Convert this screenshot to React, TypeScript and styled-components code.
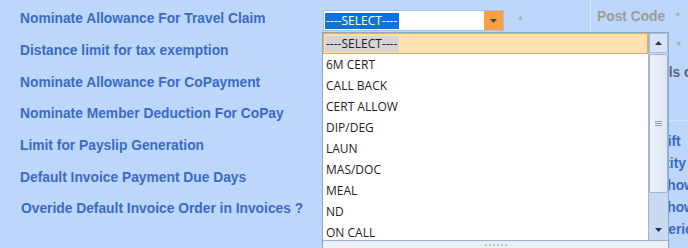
import React from "react";
import styled, { createGlobalStyle } from "styled-components";

const GlobalStyle = createGlobalStyle`
  html, body {
    margin: 0;
    padding: 0;
  }
  body {
    background: #bdd7fa;
    font-family: "Liberation Sans", Arial, sans-serif;
  }
`;

const labels = [
  "Nominate Allowance For Travel Claim",
  "Distance limit for tax exemption",
  "Nominate Allowance For CoPayment",
  "Nominate Member Deduction For CoPay",
  "Limit for Payslip Generation",
  "Default Invoice Payment Due Days",
  "Overide Default Invoice Order in Invoices ?",
];

const options = [
  "----SELECT----",
  "6M CERT",
  "CALL BACK",
  "CERT ALLOW",
  "DIP/DEG",
  "LAUN",
  "MAS/DOC",
  "MEAL",
  "ND",
  "ON CALL",
  "OT",
];

const sideRows = [
  { text: "Shift", indent: 53 },
  { text: "Quantity", indent: 33 },
  { text: "Show", indent: 61 },
  { text: "Show", indent: 61 },
  { text: "Period", indent: 62 },
];

export default function App() {
  return (
    <>
      <GlobalStyle />
      <Page>
        <Form>
          {labels.map((text, i) => (
            <FormRow key={text}>
              <Label $indent={i === 6 ? 1 : 0}>{text}</Label>
              {i === 0 && (
                <Field>
                  <SelectWrap>
                    <SelectBox>
                      <SelectText>
                        <Highlight>----SELECT----</Highlight>
                      </SelectText>
                      <ArrowButton>
                        <svg width="7" height="4" viewBox="0 0 7 4">
                          <path d="M0 0h7L3.5 4z" fill="#3b4d66" />
                        </svg>
                      </ArrowButton>
                    </SelectBox>

                    <DropPanel>
                      <ListBody>
                        <Items>
                          {options.map((o, j) => (
                            <Item key={o} $active={j === 0}>
                              <ItemText $active={j === 0}>{o}</ItemText>
                            </Item>
                          ))}
                        </Items>
                        <ScrollBar>
                          <ScrollButton $framed>
                            <svg width="7" height="4" viewBox="0 0 7 4">
                              <path d="M0 4h7L3.5 0z" fill="#2f3742" />
                            </svg>
                          </ScrollButton>
                          <Thumb>
                            <Grip />
                            <Grip />
                            <Grip />
                          </Thumb>
                          <Track />
                          <ScrollButton>
                            <svg width="7" height="4" viewBox="0 0 7 4">
                              <path d="M0 0h7L3.5 4z" fill="#2f3742" />
                            </svg>
                          </ScrollButton>
                        </ScrollBar>
                      </ListBody>
                      <Footer>
                        <Dot />
                        <Dot />
                        <Dot />
                        <Dot />
                        <Dot />
                        <Dot />
                      </Footer>
                    </DropPanel>
                  </SelectWrap>
                  <Star $gap={14}>*</Star>
                </Field>
              )}
            </FormRow>
          ))}
        </Form>

        <SidePanel>
          <SideRow $h={28} $indent={0}>
            <SideLabel $tone="muted">Post Code</SideLabel>
            <Star $gap={10}>*</Star>
          </SideRow>
          <SideRow $h={30} $indent={79}>
            <Star $gap={0}>*</Star>
          </SideRow>
          <SideRow $h={24} $indent={38}>
            <SideLabel $tone="dark">Details c</SideLabel>
          </SideRow>
          <Divider />
          <SideList>
            {sideRows.map((r, i) => (
              <SideRow key={i} $h={22} $indent={r.indent}>
                <SideLabel $tone="blue">{r.text}</SideLabel>
              </SideRow>
            ))}
          </SideList>
        </SidePanel>
      </Page>
    </>
  );
}

const Page = styled.div`
  position: relative;
  display: flex;
  width: 688px;
  height: 248px;
  overflow: hidden;
  background: #bdd7fa;
`;

const Form = styled.div`
  width: 590px;
  flex-shrink: 0;
  padding-top: 3px;
  display: flex;
  flex-direction: column;
`;

const FormRow = styled.div`
  display: flex;
  align-items: center;
  height: 31.7px;
  flex-shrink: 0;
`;

const Label = styled.label<{ $indent: number }>`
  width: 323px;
  flex-shrink: 0;
  box-sizing: border-box;
  padding-left: ${(p) => 20 + p.$indent}px;
  font-size: 13.8px;
  font-weight: bold;
  color: #3a6bc2;
  white-space: nowrap;
`;

const Field = styled.div`
  display: flex;
  align-items: center;
  margin-top: 4px;
`;

const SelectWrap = styled.div`
  position: relative;
`;

const SelectBox = styled.div`
  display: flex;
  width: 181px;
  height: 21px;
  box-sizing: border-box;
  border: 1px solid #a8c3e8;
  background: #fff;
`;

const SelectText = styled.div`
  flex: 1;
  display: flex;
  align-items: center;
  padding-left: 1px;
`;

const Highlight = styled.span`
  background: #0a74da;
  color: #fff;
  font-family: "Open Sans", sans-serif;
  font-size: 12px;
  line-height: 16px;
  padding: 0 2px 0 1px;
`;

const ArrowButton = styled.div`
  width: 19px;
  display: flex;
  align-items: center;
  justify-content: center;
  background: #f8a043;
`;

const Star = styled.span<{ $gap: number }>`
  margin-left: ${(p) => p.$gap}px;
  font-size: 13px;
  color: #a3a3a3;
`;

const DropPanel = styled.div`
  position: absolute;
  left: -1px;
  top: 22px;
  z-index: 2;
  width: 347px;
  height: 222px;
  box-sizing: border-box;
  display: flex;
  flex-direction: column;
  border: 1px solid #8fa8c8;
  background: #eceff3;
`;

const ListBody = styled.div`
  display: flex;
  height: 208px;
  box-sizing: border-box;
  border-bottom: 1px solid #9db2cf;
`;

const Items = styled.div`
  flex: 1;
  overflow: hidden;
  background: #fff;
`;

const Item = styled.div<{ $active: boolean }>`
  height: 21px;
  box-sizing: border-box;
  display: flex;
  align-items: center;
  padding-left: 1px;
  border: 1px solid ${(p) => (p.$active ? "#f5a75a" : "transparent")};
  background: ${(p) => (p.$active ? "#ffe2ae" : "transparent")};
`;

const ItemText = styled.span<{ $active: boolean }>`
  padding: 0 2px 0 1px;
  line-height: 16px;
  font-family: "Open Sans", sans-serif;
  font-size: 12px;
  color: #1f1d2a;
  background: ${(p) => (p.$active ? "#d5d5d5" : "transparent")};
`;

const ScrollBar = styled.div`
  width: 20px;
  box-sizing: border-box;
  display: flex;
  flex-direction: column;
  border-left: 1px solid #a3b6cf;
  background: #c8dbf3;
`;

const ScrollButton = styled.div<{ $framed?: boolean }>`
  height: 20px;
  box-sizing: border-box;
  display: flex;
  align-items: center;
  justify-content: center;
  border: 1px solid ${(p) => (p.$framed ? "#a6bcda" : "transparent")};
  background: ${(p) => (p.$framed ? "#d7e5f7" : "transparent")};
`;

const Thumb = styled.div`
  height: 139px;
  margin-top: 1px;
  box-sizing: border-box;
  display: flex;
  flex-direction: column;
  align-items: center;
  justify-content: center;
  gap: 1px;
  border: 1px solid #9fb3cf;
  border-radius: 2px;
  background: linear-gradient(to right, #eef3fa, #dde7f4);
`;

const Grip = styled.div`
  width: 7px;
  height: 1px;
  background: #8c9db5;
`;

const Track = styled.div`
  flex: 1;
`;

const Footer = styled.div`
  flex: 1;
  display: flex;
  justify-content: center;
  gap: 2px;
  padding-top: 3px;
`;

const Dot = styled.div`
  width: 2px;
  height: 2px;
  background: #b9c0ca;
`;

const SidePanel = styled.div`
  flex: 1;
  display: flex;
  flex-direction: column;
  padding-top: 2px;
  padding-left: 6px;
  border-left: 1px solid #d9e7fa;
  white-space: nowrap;
`;

const SideRow = styled.div<{ $h: number; $indent: number }>`
  height: ${(p) => p.$h}px;
  flex-shrink: 0;
  display: flex;
  align-items: center;
  padding-left: ${(p) => p.$indent}px;
`;

const tones = {
  muted: "#9c9c9c",
  dark: "#56637a",
  blue: "#3a6bc2",
};

const SideLabel = styled.span<{ $tone: keyof typeof tones }>`
  font-size: 13.8px;
  font-weight: bold;
  color: ${(p) => tones[p.$tone]};
`;

const Divider = styled.div`
  margin-top: 36px;
  margin-left: -6px;
  border-top: 1px solid #d6e5f9;
`;

const SideList = styled.div`
  display: flex;
  flex-direction: column;
  margin-top: 9px;
`;
